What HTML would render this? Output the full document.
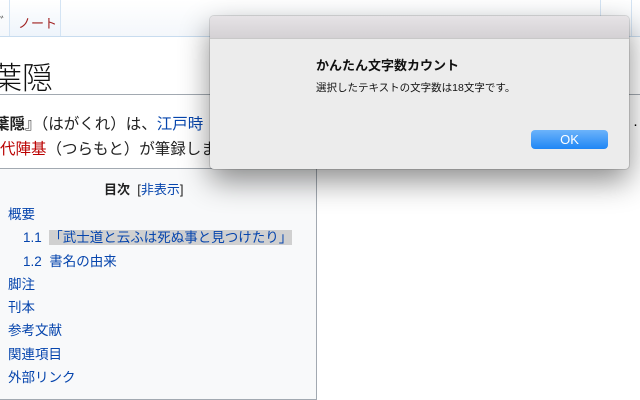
<!DOCTYPE html>
<html><head><meta charset="utf-8"><style>
body{margin:0;width:640px;height:400px;overflow:hidden;background:#fff;font-family:"Liberation Sans","Noto Sans CJK JP",sans-serif;position:relative}
.a{position:absolute;white-space:nowrap}
</style></head><body>
<div class="a" style="left:0;top:0;width:640px;height:36px;background:linear-gradient(#fff,#f4f7fb)"></div>
<div class="a" style="left:0;top:36px;width:640px;height:1px;background:#c8dcef"></div>
<div class="a" style="left:9px;top:0;width:50px;height:36px;border-left:1px solid #d4e4f4;border-right:1px solid #d4e4f4;background:linear-gradient(#fff,#eef4fb)"></div>
<div class="a" style="left:0;top:12px;font-size:13px;color:#555">ﾞ</div>
<div class="a" style="left:18px;top:13px;font-size:13px;color:#a02020">ノート</div>
<div class="a" style="left:600px;top:0;width:30px;height:36px;border-left:1px solid #d4e4f4;border-right:1px solid #d4e4f4"></div>
<div class="a" style="left:-9px;top:53px;font-size:31px;color:#111;font-family:'Liberation Sans','Noto Sans CJK JP',sans-serif;font-weight:300">葉隠</div>
<div class="a" style="left:0;top:94px;width:640px;height:1px;background:#a2a9b1"></div>
<div class="a" style="left:-6px;top:112px;font-size:15.5px;color:#222"><b>葉隠</b>』（はがくれ）は、<span style="color:#0645ad">江戸時</span></div>
<div class="a" style="left:0;top:137px;font-size:15.5px;color:#222"><span style="color:#ba0000">代陣基</span>（つらもと）が筆録しま</div>
<div class="a" style="left:633px;top:116px;font-size:15px">·</div>
<div class="a" style="left:-1px;top:168px;width:316px;height:230px;background:#f8f9fa;border:1px solid #a2a9b1"></div>
<div class="a" style="left:104px;top:179px;font-size:13px;color:#222"><b>目次</b> &nbsp;[<span style="color:#0645ad">非表示</span>]</div>
<div class="a" style="left:8px;top:203px;font-size:13.5px;color:#0645ad;line-height:23.3px">概要<br>
&nbsp;&nbsp;&nbsp;&nbsp;1.1 &nbsp;<span style="background:#d0d0d0">「武士道と云ふは死ぬ事と見つけたり」</span><br>
&nbsp;&nbsp;&nbsp;&nbsp;1.2 &nbsp;書名の由来<br>脚注<br>刊本<br>参考文献<br>関連項目<br>外部リンク</div>
<div class="a" style="left:210px;top:16px;width:419px;height:153px;background:#ececec;border-radius:4px;box-shadow:0 12px 30px rgba(0,0,0,.45),0 0 0 1px rgba(0,0,0,.12);overflow:hidden">
<div style="height:22px;background:linear-gradient(#e6e3e6,#d4d1d4);border-bottom:1px solid #c8c8c8"></div>
<div class="a" style="left:106px;top:39px;font-size:13px;font-weight:bold;color:#111">かんたん文字数カウント</div>
<div class="a" style="left:106px;top:64px;font-size:10.5px;color:#111">選択したテキストの文字数は18文字です。</div>
<div class="a" style="left:321px;top:114px;width:77px;height:19px;border-radius:4px;background:linear-gradient(#6cb3fa,#1f86f5);color:#fff;font-size:13px;text-align:center;line-height:19px">OK</div>
</div>
</body></html>
